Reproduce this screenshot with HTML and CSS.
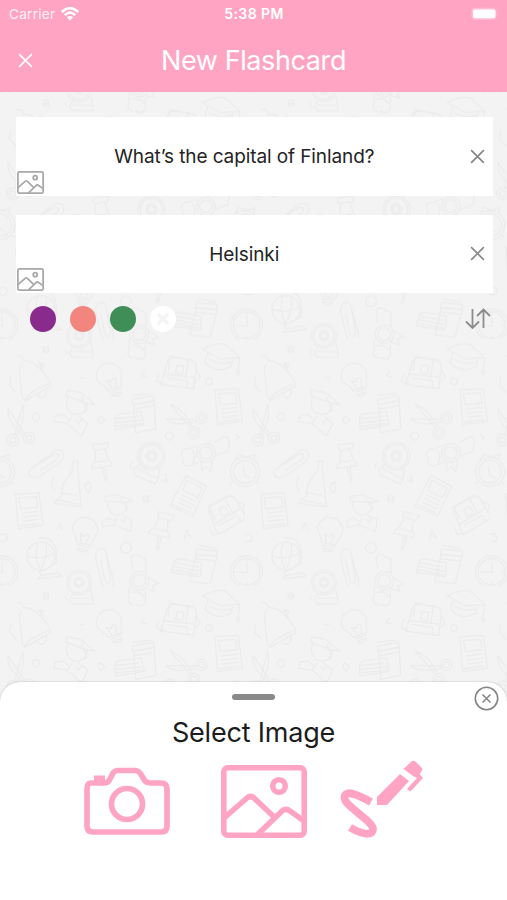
FILE: index.html
```html
<!DOCTYPE html>
<html lang="en">
<head>
<meta charset="utf-8">
<title>New Flashcard</title>
<link rel="stylesheet" href="styles.css">
</head>
<body>
<svg class="defs" width="0" height="0" aria-hidden="true">
  <symbol id="picture" viewBox="0 0 86 73">
    <g fill="none" stroke="currentColor" stroke-width="5.6" stroke-linejoin="round">
      <rect x="2.8" y="2.8" width="80.4" height="67.4" rx="4"/>
      <circle cx="58" cy="21" r="6.3"/>
      <path d="M3 53 26 33Q29.500 30 33 33L52 51M36 70 59 48Q64 42 69 46L83 56"/>
    </g>
  </symbol>
  <symbol id="cross" viewBox="0 0 16 16"><path d="M1.200 1.200 14.800 14.800M14.800 1.200 1.200 14.800" fill="none" stroke="currentColor" stroke-width="1.700"/></symbol>
</svg>
<div class="phone">
  <header class="top">
    <div class="status">
      <div class="carrier"><span>Carrier</span>
        <svg width="18" height="14" viewBox="0 0 18 14" fill="none" stroke="#fff" stroke-width="2.600"><path d="M.8 5Q9-2.600 17.200 5M3.800 8.100Q9 3.300 14.200 8.100"/><path d="M5.900 10.300Q9 7.600 12.100 10.300L9 13.600Z" fill="#fff" stroke="none"/></svg>
      </div>
      <div class="time">5:38 PM</div>
      <svg class="battery" width="28" height="14" viewBox="0 0 28 14"><rect x=".5" y=".8" width="25" height="12" rx="3.500" fill="#ffbdd0"/><rect x="2" y="2.500" width="22.500" height="8.800" rx="2" fill="#fff"/><path d="M26.300 5Q28 7 26.300 9Z" fill="#ffbdd0"/></svg>
    </div>
    <div class="nav">
      <svg class="back" width="15" height="15"><use href="#cross"/></svg>
      <h1>New Flashcard</h1>
    </div>
  </header>
  <svg class="doodles" width="507" height="620" aria-hidden="true">
    <defs>
      <g id="bulb"><path d="M-18 38C-20 15-42 10-38-10A39 39 0 0 1 39-6C39 12 24 20 27 38ZM-15 46 25 44M-11 54H20Q12 66-3 61ZM-4 35-12 8 0 16 9 6 17 12 10 35"/></g>
      <g id="scissors"><circle cx="-22" cy="42" r="18"/><circle cx="-22" cy="42" r="9"/><circle cx="27" cy="35" r="17"/><circle cx="27" cy="35" r="8"/><path d="M-15 24 8-65Q16-30 0 8L-10 28M14 23-36-52Q-40-20-8 10L10 30"/></g>
      <g id="clip"><path d="M-42 25 18-22C45-42 64-12 42 6L-16 48C-48 66-68 38-42 25L16-12C38-24 42-8 26 4L-20 33"/></g>
      <g id="pin"><path d="M-24-44 24-50 20-34 12-30 22 2Q36 8 32 18L-28 28Q-28 14-18 8L-16-28-24-32ZM2 24 14 64 18 60 12 22M-14-28 12-32M-16 8 20 2"/></g>
      <g id="books"><path d="M-12-44 50-56 54-42-10-28ZM-8-28 54-40 58 44-2 56ZM-65 14Q-62-2-40-2L14-8 24 32-64 46ZM-60 14 10 6M-62 26 16 18M-61 36 18 28M-10-14 52-26M-12-56 44-62"/></g>
      <g id="student"><path d="M-24-58 18-50 60-14 30-20-28-42ZM-22-38C-36 0-8 20 13 14S42-18 29-22M20-38 35 2 29 10M-8 20-24 42 20 80 38 42 10 20M-24 42-65 36-58 18-35 14-20 30M2 28 10 42 22 28"/></g>
      <g id="bag"><path d="M-36-20Q-35-46-10-46L35-40Q56-36 54-14L46 48-53 35ZM-28-50 46-36M-45 3 48 14M-25-46-30-8M30-38 22 12M-34 15 28 24 26 48M-4-24 16-20 13 4-8 0ZM-58 0-66 26-44 32M54-10 66 12 45 30"/></g>
      <g id="cap"><path d="M-58-28Q-10-50 10-42L55-2-4 2ZM-40-18-50 12Q-28 36 2 34L28 24 34 4M55-2 48 38M-38 2Q-5 22 32 10M44 38Q50 26 54 44L48 50Z"/></g>
      <g id="note"><path d="M-38-48 32-52 44 46-30 56ZM-28-37 24-40 28-9-22-4ZM-20 10 30 3M-18 22 31 16M-16 34 32 28M-27 48 34 40"/></g>
      <g id="scroll"><path d="M-74 10Q-76-14-52-12L-26-22M-70 14Q-72 46-45 38L-22 28M-42-8Q-26 8-40 32M24-30 54-48Q76-50 68-22L67-6 28 10"/><circle r="28"/><circle r="19"/><path d="M-15 24-12 54 0 42 14 57 20 20"/></g>
      <g id="tape"><circle r="41"/><circle r="34"/><circle r="16"/><circle r="10"/><path d="M-32 24-54 40-50 56 12 84 20 68-42 38M20 68 25 38M-56 20Q-68 24-60 38"/></g>
      <g id="bell"><path d="M-48-70Q-32-74-25-56 14-56 54 8L56 19-22 64-30 55-38-20Q-41-38-32-47M-22 60Q-10 36 52 12M18 46Q26 66 42 42V28M-64-10-68 18-48 40M18-48Q28-40 30-25"/></g>
      <g id="flask"><path d="M12-76 28-74 25-58 37 62-46 52-40 42-22 28C-25-20 0-20 14-56ZM-37 42 30 55M-45-30Q-60 2-42 14M62-14Q70 0 60 20Q46 14 50-5ZM-25 20 24 28"/></g>
      <g id="clock"><circle r="48"/><circle r="40"/><path d="M0-26 3 2H-24M0-37V-31M36 0H30M0 37V31M-36 0H-30"/></g>
      <g id="alarm"><circle r="44"/><circle r="34"/><path d="M-30-31-20-54 7-44 30-53 26-36M-6-18 0 12 18 18M-34 28-46 38M30 30 44 35"/></g>
      <g id="globe"><circle r="42"/><path d="M-40 0Q0 14 40-9M-10-40Q-22 0-2 42M15-40Q22 2-2 42M-8-54Q56-62 45 22L-6 48M-6 48 2 58 48 50M0 58-8 69 62 60 48 48"/></g>
      <pattern id="school" width="735" height="740" patternUnits="userSpaceOnUse" patternTransform="translate(0 247.500) scale(.3333)">
        <g fill="none" stroke="#ebebec" stroke-width="3.800" stroke-linejoin="round">
          <use href="#bell" x="97" y="120"/>
          <use href="#bulb" transform="translate(328 112) rotate(-20)"/>
          <use href="#bag" x="535" y="100"/>
          <use href="#cap" x="665" y="57"/>
          <use href="#note" x="683" y="200"/>
          <use href="#scissors" x="60" y="260"/>
          <use href="#student" x="225" y="210"/>
          <use href="#books" x="409" y="224"/>
          <use href="#scissors" transform="translate(560 238) rotate(-55)"/>
          <use href="#clip" x="140" y="360"/>
          <use href="#pin" x="303" y="360"/>
          <use href="#tape" x="454" y="350"/>
          <use href="#scroll" x="618" y="340"/>
          <use href="#alarm" x="735" y="397"/><use href="#alarm" x="0" y="397"/>
          <use href="#flask" x="207" y="440"/>
          <use href="#note" x="85" y="512"/>
          <use href="#student" transform="translate(352 514) rotate(-18) scale(.9)"/>
          <use href="#note" transform="translate(565 468) rotate(32)"/>
          <use href="#pin" transform="translate(482 566) rotate(23)"/>
          <use href="#bag" transform="translate(674 526) rotate(-38)"/>
          <use href="#bulb" transform="translate(254 575) rotate(12)"/>
          <use href="#globe" x="123" y="650"/>
          <use href="#clock" x="740" y="697"/><use href="#clock" x="5" y="697"/>
          <use href="#books" transform="translate(588 674) rotate(17)"/>
          <use href="#clip" transform="translate(326 693) rotate(112)"/>
          <use href="#tape" transform="translate(237 729) rotate(-25) scale(.9)"/>
          <use href="#tape" transform="translate(237 -11) rotate(-25) scale(.9)"/>
          <use href="#scroll" transform="translate(418 724) rotate(-68)"/>
          <use href="#scroll" transform="translate(418 -16) rotate(-68)"/>
          <path d="M130 22h15v16h-15zM132 30h12M430 470h15v17h-15zM432 479h12M435 95l-12 14 18 4M300 230l15 12-12 12-10-11zM496 405l5 25M486 423l18-2M170 570l10-18 7 20M552 602l8-30 14 25M555 590h13M120 70l13 5-7 12zM240 115l14 0M704 285l14 8-10 8"/>
          <circle cx="509" cy="290" r="12"/><circle cx="108" cy="232" r="11"/><circle cx="627" cy="126" r="10"/><circle cx="378" cy="625" r="16"/><circle cx="9" cy="595" r="12"/>
        </g>
      </pattern>
    </defs>
    <rect width="507" height="620" fill="url(#school)"/>
  </svg>
  <main class="content">
    <section class="card">
      <svg class="pic" width="27" height="23"><use href="#picture"/></svg>
      <p>What’s the capital of Finland?</p>
      <svg class="clear" width="15" height="15"><use href="#cross"/></svg>
    </section>
    <section class="card">
      <svg class="pic" width="27" height="23"><use href="#picture"/></svg>
      <p>Helsinki</p>
      <svg class="clear" width="15" height="15"><use href="#cross"/></svg>
    </section>
    <div class="tools">
      <i class="dot purple"></i><i class="dot coral"></i><i class="dot green"></i>
      <i class="dot none"><svg width="12" height="12" viewBox="0 0 12 12"><path d="M1 1 11 11M11 1 1 11" stroke="#f4f4f4" stroke-width="3.500"/></svg></i>
      <svg class="sort" width="26" height="22" viewBox="0 0 26 22" fill="none" stroke="#8b8b8b" stroke-width="1.800"><path d="M7.500 1V20M1 13.500 7.500 20 14 13.500M18.500 20V1.500M12 8 18.500 1.500 25 8"/></svg>
    </div>
  </main>
  <footer class="sheet">
    <div class="grip"></div>
    <svg class="dismiss" width="25" height="25" viewBox="0 0 25 25" fill="none" stroke="#858585" stroke-width="1.600"><circle cx="12.500" cy="12.500" r="11.200"/><path d="M8.500 8.500 16.500 16.500M16.500 8.500 8.500 16.500"/></svg>
    <h2>Select Image</h2>
    <div class="actions">
      <svg width="86" height="78" viewBox="84 760 86 78" fill="none" stroke="currentColor" stroke-width="5.700" stroke-linejoin="round"><path d="M91 783H105Q108 783 110 779L113 773Q115 770.500 118 770.500H135Q138 770.500 140 773L145 781Q147 783 150 783H161Q167 783 167 789V826Q167 832 161 832H93Q87 832 87 826V789Q87 783 91 783Z"/><path d="M94 775.500H105V784H94Z" fill="currentColor" stroke="none"/><circle cx="127" cy="804" r="15.500"/></svg>
      <svg class="gallery" width="86" height="73"><use href="#picture"/></svg>
      <svg class="draw" width="84" height="78" viewBox="340 760 84 78"><path d="M371 802C360 796 344.500 788 344.500 798C344.500 806 373 821 373 829C373 837 360 833.500 350 827.500" fill="none" stroke="currentColor" stroke-width="7.800"/><path d="M377 797 400 774 409 781 387 805H377ZM403.500 769 412 761Q414 760 416 762L422 768Q423 770 421 772L419.500 774 423 778 410.500 791.500 407 789 417 778 413 776Z" fill="currentColor"/></svg>
    </div>
  </footer>
</div>
</body>
</html>
```
FILE: styles.css
```css
* { box-sizing: border-box; }
body { margin: 0; background: #f2f2f2; font-family: Inter, "Liberation Sans", sans-serif; }
svg { display: block; flex: none; }
.defs { position: absolute; }
h1, h2, p { margin: 0; font-weight: 400; white-space: nowrap; }
.phone { display: grid; grid-template-rows: 92px 589.5px 218.5px; grid-template-columns: 507px; height: 900px; overflow: hidden; background: #f3f3f3; }
.top { grid-area: 1 / 1; background: #ffa5c3; color: #fff; }
.status { display: grid; grid-template-columns: 1fr auto 1fr; align-items: center; height: 27px; padding: 0 8px 0 9px; font-size: 13.5px; }
.carrier { display: flex; align-items: center; gap: 6px; letter-spacing: .3px; color: #fff0f5; }
.time { font-weight: 600; font-size: 14px; letter-spacing: .4px; }
.battery { justify-self: end; }
.nav { display: grid; grid-template-columns: 60px 1fr 60px; align-items: center; height: 66px; }
.back { margin-left: 18px; margin-top: 1px; }
h1 { text-align: center; font-size: 27px; letter-spacing: -.4px; }
.doodles { grid-area: 2 / 1 / 4 / 2; }
.content { grid-area: 2 / 1; padding: 25px 14.5px 0 16px; }
.card { display: grid; grid-template-columns: 40px 1fr 40px; align-items: center; height: 78.5px; margin-bottom: 19px; background: #fff; text-align: center; color: #242424; font-size: 19px; letter-spacing: -.1px; }
.card p { margin-left: -20px; padding-top: 1px; }
.pic { align-self: end; margin: 0 0 2px 1px; color: #a9a9a9; }
.clear { color: #858585; justify-self: end; margin-right: 8px; }
.tools { display: flex; align-items: center; gap: 14px; padding: 0 2px 0 14px; margin-top: -6px; height: 26px; }
.dot { display: grid; place-items: center; width: 26px; height: 26px; border-radius: 50%; }
.purple { background: #892b8d; }
.coral { background: #f2857d; }
.green { background: #3f8d57; }
.none { background: #fff; }
.sort { margin-left: auto; }
.sheet { grid-area: 3 / 1; position: relative; background: #fff; border-radius: 20px 20px 0 0; box-shadow: 0 0 2px rgba(0,0,0,.28); padding-top: 12px; }
.grip { width: 43px; height: 6px; border-radius: 3px; background: #8a8a8a; margin: 0 auto; }
.dismiss { position: absolute; top: 4.5px; right: 8px; }
h2 { margin-top: 15px; line-height: 36px; font-size: 27px; text-align: center; color: #1c1c1c; letter-spacing: -.2px; }
.actions { display: flex; padding-left: 84px; margin-top: 9px; height: 78px; color: #ffa5c3; }
.gallery { margin: 5px 0 0 51px; }
.draw { margin-left: 33px; overflow: visible; }
```
